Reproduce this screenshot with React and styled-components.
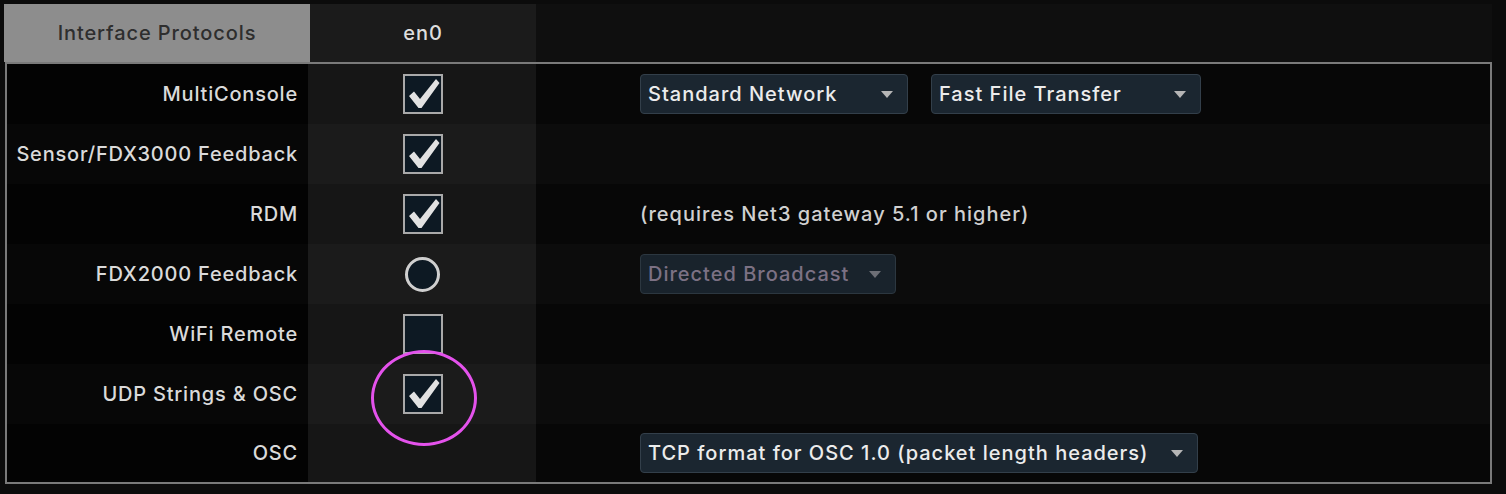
import React from 'react';
import styled, { createGlobalStyle } from 'styled-components';

const GlobalStyle = createGlobalStyle`
  html, body {
    margin: 0;
    padding: 0;
    background: #0b0b0b;
  }
  body {
    font-family: Inter, "Liberation Sans", Arial, sans-serif;
    -webkit-font-smoothing: antialiased;
  }
`

const Page = styled.div`
  width: 1506px;
  height: 494px;
  padding: 4px 0 0 4px;
  box-sizing: border-box;
  position: relative;
  overflow: hidden;
`

const Frame = styled.div`
  width: 1488px;
`

const HeaderRow = styled.div`
  display: flex;
  height: 58px;
`

const Tab = styled.div`
  width: 306px;
  display: flex;
  align-items: center;
  justify-content: center;
  background: #8d8d8d;
  color: #2e2e2e;
  font-size: 20px;
  font-weight: 500;
  letter-spacing: 0.9px;
`

const ColHead = styled.div`
  width: 226px;
  display: flex;
  align-items: center;
  justify-content: center;
  background: #1b1b1b;
  color: #dedede;
  font-size: 20px;
  font-weight: 500;
  letter-spacing: 0.9px;
`

const HeadFill = styled.div`
  flex: 1;
  background: #0f0f0f;
`

const Panel = styled.div`
  border: 2px solid #7a7a7a;
  margin-left: 1px;
  display: flex;
  flex-direction: column;
`

const Row = styled.div`
  display: flex;
  height: 60px;
  &:last-child {
    height: 58px;
  }
`

const Label = styled.div`
  width: 301px;
  padding-right: 10px;
  box-sizing: border-box;
  display: flex;
  align-items: center;
  justify-content: flex-end;
  background: ${p => (p.$alt ? '#070707' : '#030303')};
  color: #dadada;
  font-size: 20px;
  font-weight: 500;
  letter-spacing: 0.8px;
  white-space: nowrap;
`

const Toggle = styled.div`
  width: 228px;
  display: flex;
  align-items: center;
  justify-content: center;
  background: ${p => (p.$alt ? '#1b1b1b' : '#161616')};
`

const Options = styled.div`
  flex: 1;
  display: flex;
  align-items: center;
  gap: 23px;
  padding-left: 104px;
  background: ${p => (p.$alt ? '#0c0c0c' : '#070707')};
  color: #d2d2d2;
  font-size: 20px;
  font-weight: 500;
  letter-spacing: 1px;
`

const Box = styled.div`
  width: 40px;
  height: 40px;
  box-sizing: border-box;
  border: 2px solid #a9a9a9;
  background: #0d1923;
  display: flex;
  align-items: center;
  justify-content: center;
  margin-left: 2px;
  svg {
    width: 36px;
    height: 36px;
  }
`

const Radio = styled.div`
  width: 35px;
  height: 35px;
  box-sizing: border-box;
  border-radius: 50%;
  border: 3px solid #cfcfcf;
  background: #0d1923;
`

const Select = styled.div`
  width: ${p => p.$w}px;
  height: 40px;
  box-sizing: border-box;
  padding: 0 14px 0 7px;
  display: flex;
  align-items: center;
  justify-content: space-between;
  background: ${p => (p.$disabled ? '#19232c' : '#1b2630')};
  border: 1px solid ${p => (p.$disabled ? '#2c3740' : '#333f4a')};
  border-radius: 4px;
  color: ${p => (p.$disabled ? '#7c7184' : '#ececec')};
  white-space: nowrap;
`

const Caret = styled.span`
  width: 0;
  height: 0;
  border-left: 6px solid transparent;
  border-right: 6px solid transparent;
  border-top: 7px solid ${p => (p.$disabled ? '#6d6f76' : '#b5b5b5')};
`

const Note = styled.span`
  color: #d0d0d0;
`

const Highlight = styled.div`
  position: absolute;
  left: 371px;
  top: 350px;
  width: 106px;
  height: 96px;
  box-sizing: border-box;
  border: 3px solid #e452ec;
  border-radius: 50%;
  pointer-events: none;
`

const Check = () => (
  <svg viewBox="0 0 36 36">
    <path d="M4 20 L9 15.5 L15 23 L31 3 L34.5 7 L16.5 32 L13.5 32 Z" fill="#e2e2e2" />
  </svg>
)

const Dropdown = ({ width, disabled, children }) => (
  <Select $w={width} $disabled={disabled}>
    <span>{children}</span>
    <Caret $disabled={disabled} />
  </Select>
)

const rows = [
  {
    label: 'MultiConsole',
    control: 'check',
    options: (
      <>
        <Dropdown width={268}>Standard Network</Dropdown>
        <Dropdown width={270}>Fast File Transfer</Dropdown>
      </>
    ),
  },
  { label: 'Sensor/FDX3000 Feedback', control: 'check' },
  {
    label: 'RDM',
    control: 'check',
    options: <Note>(requires Net3 gateway 5.1 or higher)</Note>,
  },
  {
    label: 'FDX2000 Feedback',
    control: 'radio',
    options: <Dropdown width={256} disabled>Directed Broadcast</Dropdown>,
  },
  { label: 'WiFi Remote', control: 'empty' },
  { label: 'UDP Strings & OSC', control: 'check' },
  {
    label: 'OSC',
    control: 'none',
    options: <Dropdown width={558}>TCP format for OSC 1.0 (packet length headers)</Dropdown>,
  },
]

const renderControl = kind => {
  if (kind === 'check') return <Box><Check /></Box>
  if (kind === 'empty') return <Box />
  if (kind === 'radio') return <Radio />
  return null
}

const App = () => (
  <Page>
    <GlobalStyle />
    <Frame>
      <HeaderRow>
        <Tab>Interface Protocols</Tab>
        <ColHead>en0</ColHead>
        <HeadFill />
      </HeaderRow>
      <Panel>
        {rows.map((r, i) => (
          <Row key={r.label}>
            <Label $alt={i % 2 === 1}>{r.label}</Label>
            <Toggle $alt={i % 2 === 1}>{renderControl(r.control)}</Toggle>
            <Options $alt={i % 2 === 1}>{r.options}</Options>
          </Row>
        ))}
      </Panel>
    </Frame>
    <Highlight />
  </Page>
)

export default App;
